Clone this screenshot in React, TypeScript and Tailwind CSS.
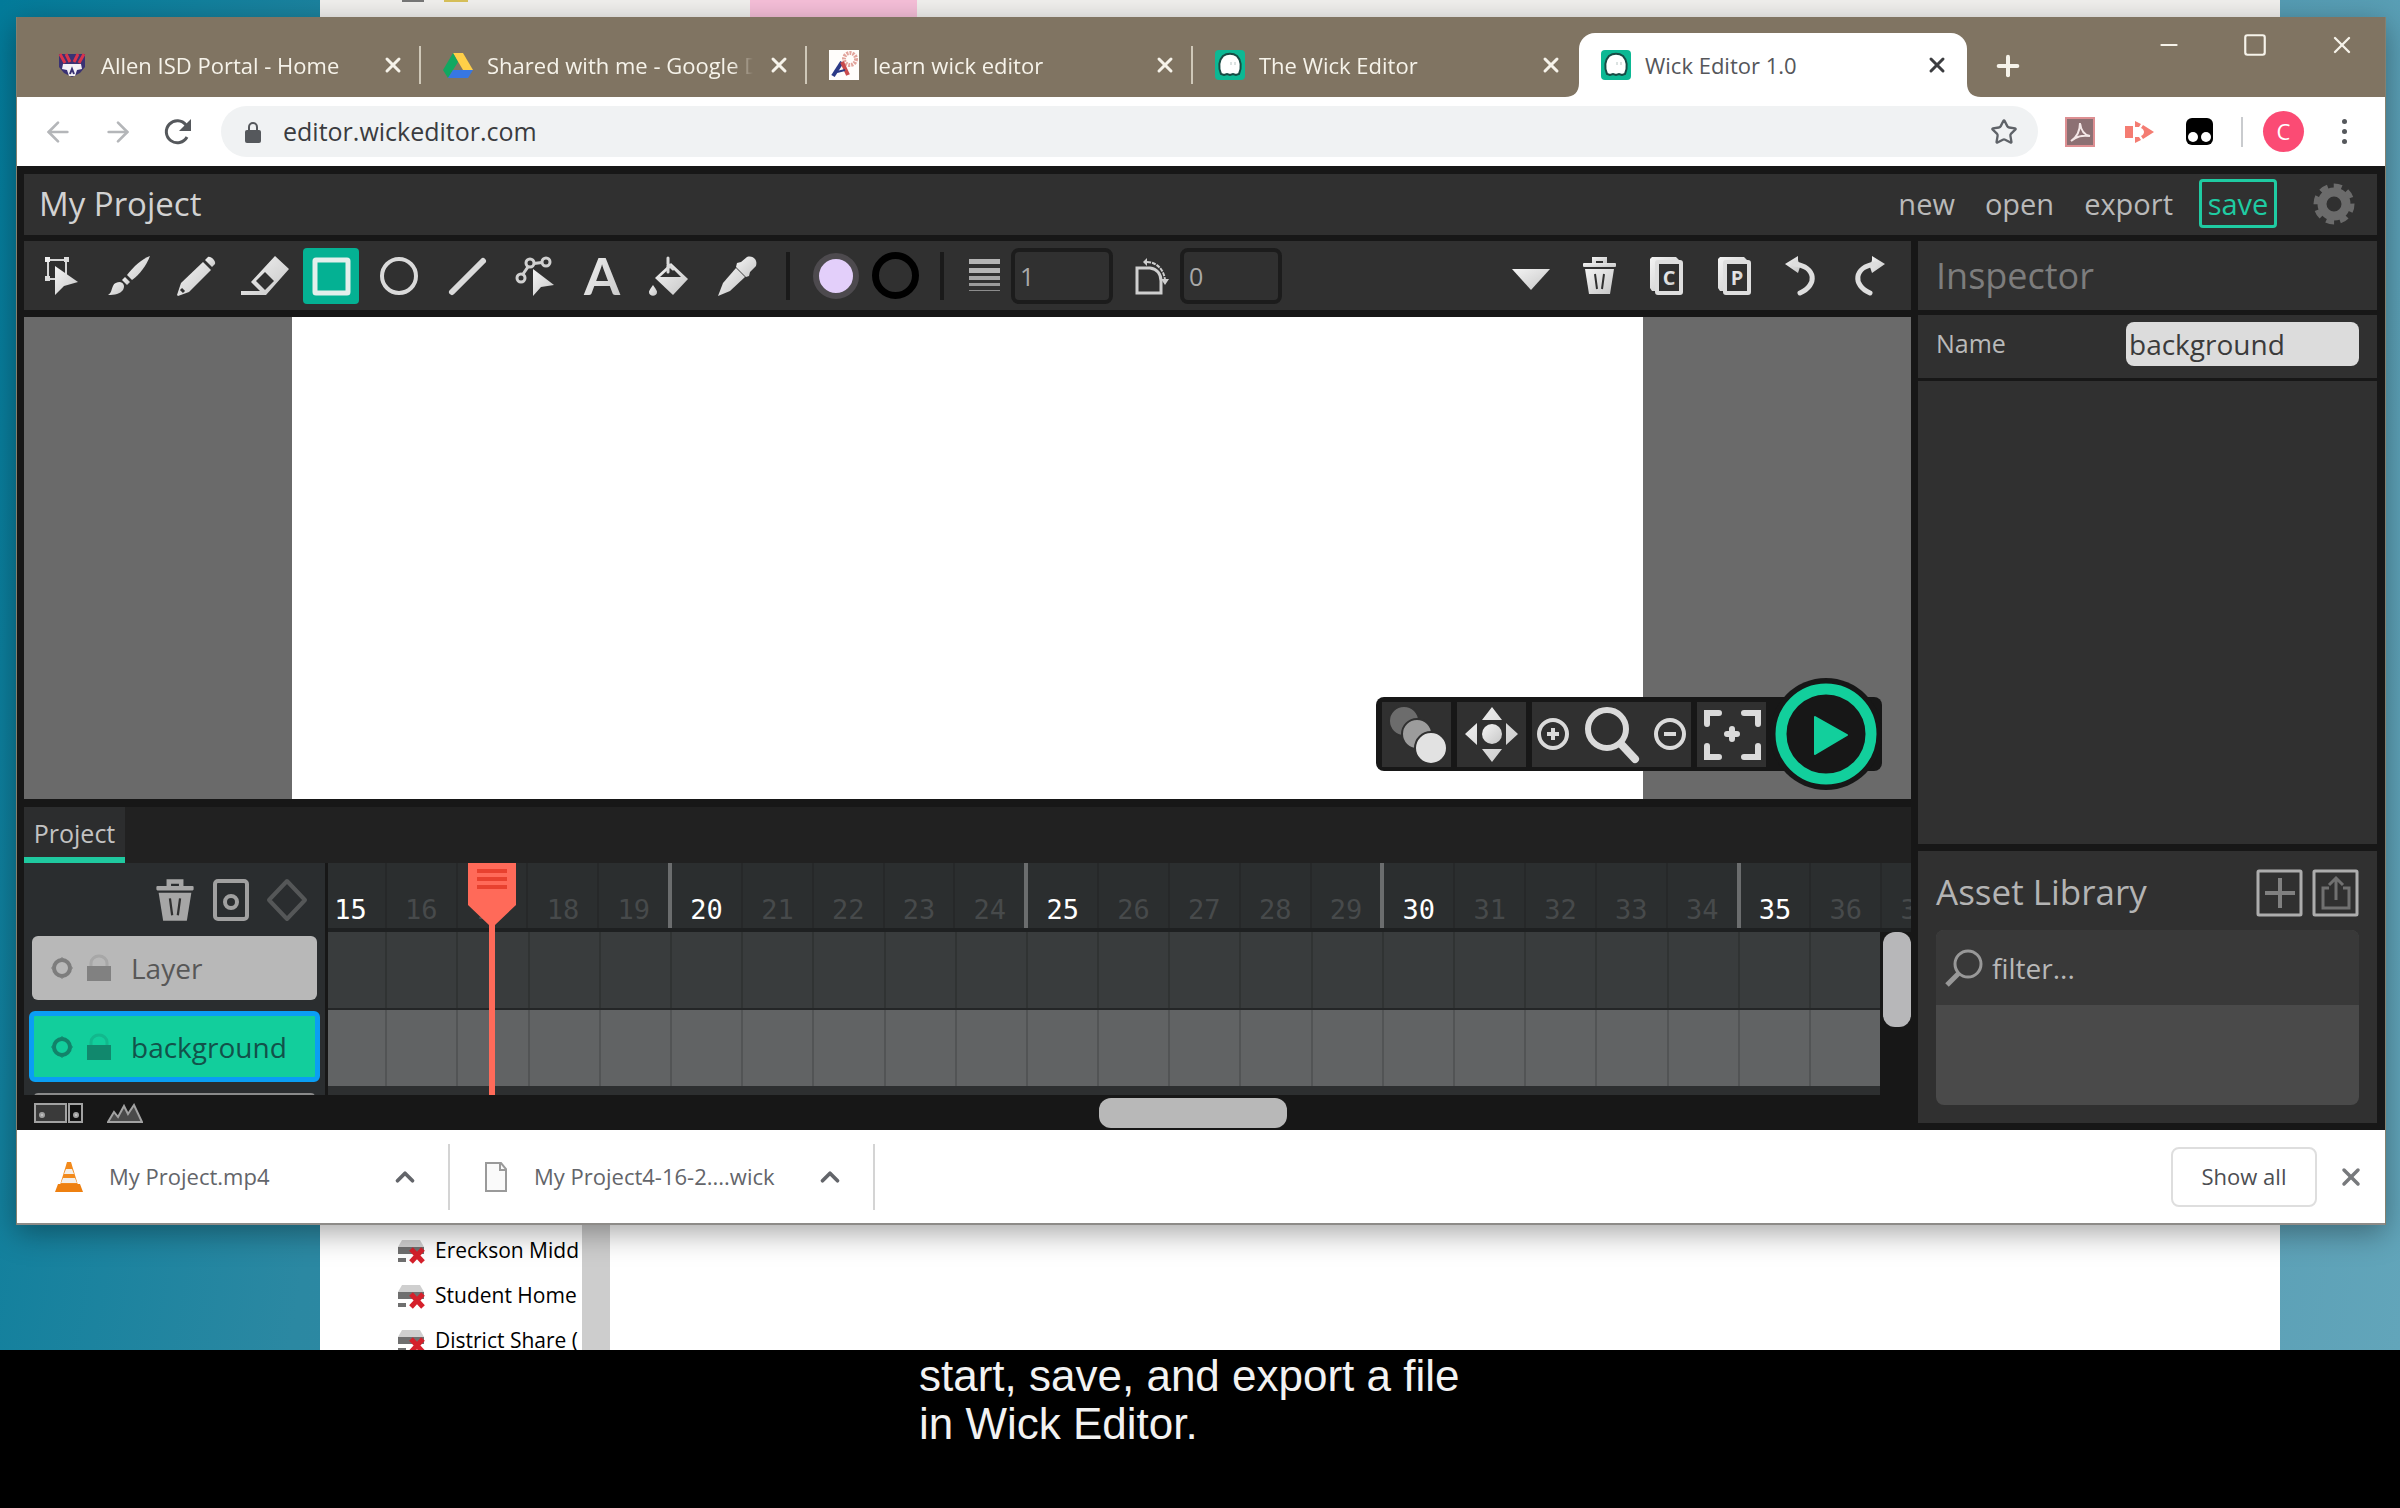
import type { ReactNode } from 'react'
import {
  ArrowLeft,
  ArrowRight,
  ChevronUp,
  Minus,
  Plus,
  Square,
  Star,
  X,
} from 'lucide-react'

const uiFont = "font-['Open_Sans','Noto_Sans',sans-serif]"

const frames = Array.from({ length: 23 }, (_, i) => i + 15)

const sharedFiles = ['Ereckson Midd', 'Student Home', 'District Share (']

/* ---------- favicons ---------- */

function SchoolIcon() {
  return (
    <svg viewBox="0 0 30 30" className="size-[30px] shrink-0">
      <path d="M2 4h26v13l-5 6-8 4-8-4-5-6z" fill="#3a3274" />
      <path d="M3 4l5 9M9 4l4 8M21 4l-4 8M27 4l-5 9" stroke="#d8344c" strokeWidth="3" />
      <path d="M6 14h18l1 5-5 1-2 6h-6l-2-6-5-1z" fill="#f3f1f6" />
      <path d="M13 24l2-5 2 5" stroke="#3a3274" strokeWidth="2" fill="none" />
    </svg>
  )
}

function DriveIcon() {
  return (
    <svg viewBox="0 0 30 30" className="size-[30px] shrink-0">
      <path d="M10 3h10l10 17H20z" fill="#ffcf48" />
      <path d="M10 3l5 9L5 28 0 20z" fill="#11a861" />
      <path d="M10 20h20l-5 8H5z" fill="#3777e3" />
    </svg>
  )
}

function LearnIcon() {
  return (
    <svg viewBox="0 0 30 30" className="size-[30px] shrink-0">
      <rect width="30" height="30" fill="#fffdfb" />
      <circle cx="21" cy="9" r="6" fill="none" stroke="#e2a49c" strokeWidth="4" strokeDasharray="2 1" />
      <path d="M4 26l9-14" stroke="#2c3a86" strokeWidth="4" />
      <path d="M13 12l6 13" stroke="#c94a4c" strokeWidth="4" />
      <path d="M8 22l8-2" stroke="#2c3a86" strokeWidth="2" />
    </svg>
  )
}

function WickIcon() {
  return (
    <svg viewBox="0 0 30 30" className="size-[30px] shrink-0">
      <rect width="30" height="30" rx="4" fill="#0cb894" />
      <path
        d="M6 24c-3-7-2-14 2-18 4-3 10-3 14 0 4 4 5 11 2 18l-3 1-3-1-3 1-3-1-3 1z"
        fill="#fff"
        stroke="#174b44"
        strokeWidth="2"
      />
      <path d="M16 12v3M20 12v3" stroke="#b9c6c4" strokeWidth="1" />
    </svg>
  )
}

const tabs = [
  { title: 'Allen ISD Portal - Home', icon: <SchoolIcon />, divider: true },
  { title: 'Shared with me - Google D', icon: <DriveIcon />, divider: true },
  { title: 'learn wick editor', icon: <LearnIcon />, divider: true },
  { title: 'The Wick Editor', icon: <WickIcon />, divider: false },
]

/* ---------- editor icons, all on a 56px board ---------- */

function Icon({ children }: { children: ReactNode }) {
  return (
    <svg viewBox="0 0 56 56" className="size-14" fill="url(#metal)" stroke="none">
      {children}
    </svg>
  )
}

function TrashShape() {
  return (
    <>
      <path d="M21 15v-6h15v6h-4v-2h-7v2z" />
      <rect x="12" y="15" width="33" height="4" rx="1" />
      <path d="M14 21h29l-4 25H18z" />
      <path d="M24 26l2 15M33 26l-2 15" stroke="#303030" strokeWidth="2" fill="none" />
    </>
  )
}

function PageShape({ letter }: { letter: string }) {
  return (
    <>
      <path d="M14 9h24l4 4H19v30h-5l-2-3V11z" />
      <rect x="19" y="14" width="24" height="31" rx="1" fill="#303030" stroke="#dedede" strokeWidth="4" />
      <text x="31" y="37" textAnchor="middle" className="font-['Open_Sans',sans-serif] text-[20px] font-bold">
        {letter}
      </text>
    </>
  )
}

const tools = [
  {
    name: 'Cursor',
    icon: (
      <>
        <rect x="15" y="12" width="18" height="19" fill="none" stroke="#d6d6d6" strokeWidth="2" />
        <path d="M12 9h5v5h-5zM31 9h5v5h-5zM12 28h5v5h-5z" />
        <path d="M22 18l23 16-14 4-9 9z" />
      </>
    ),
  },
  {
    name: 'Brush',
    icon: (
      <>
        <path d="M49 8C41 11 33 18 26 27l5 5C39 26 45 18 49 8z" />
        <path d="M24 29l5 5-3 3-5-5z" />
        <path d="M19 34c4 1 5 4 3 8-3 4-8 5-15 5 4-3 3-5 5-9 1-3 4-4 7-4z" />
      </>
    ),
  },
  {
    name: 'Pencil',
    icon: (
      <>
        <path d="M35 14l8 8-22 22-11 4-1-1 4-12z" />
        <path d="M37 12l3-3c3-1 8 4 7 7l-3 3z" />
        <path d="M13 41l3 3" stroke="#303030" strokeWidth="3" />
      </>
    ),
  },
  {
    name: 'Eraser',
    icon: (
      <>
        <path d="M39 8l14 13-23 26H5v-4h19l-9-9z" />
        <path d="M29 24l9 9-9 9-9-9z" fill="#303030" />
      </>
    ),
  },
  {
    name: 'Rectangle',
    icon: <rect x="12" y="12" width="33" height="33" rx="1" fill="none" stroke="#e4efec" strokeWidth="5" />,
  },
  {
    name: 'Ellipse',
    icon: <circle cx="28" cy="28" r="17" fill="none" stroke="#dadada" strokeWidth="4" />,
  },
  {
    name: 'Line',
    icon: <path d="M13 44L44 13" stroke="#dadada" strokeWidth="6" strokeLinecap="round" />,
  },
  {
    name: 'Path cursor',
    icon: (
      <>
        <path d="M15 29l9-13 16-2" fill="none" stroke="#d0d0d0" strokeWidth="3" />
        <g fill="#303030" stroke="#d0d0d0" strokeWidth="3">
          <circle cx="15" cy="30" r="4" />
          <circle cx="24" cy="15" r="4" />
          <circle cx="40" cy="14" r="4" />
        </g>
        <path d="M27 21l21 16-13 2-8 9z" />
      </>
    ),
  },
  {
    name: 'Text',
    icon: (
      <text x="28" y="47" textAnchor="middle" className="font-['Lato',sans-serif] text-[52px] font-bold">
        A
      </text>
    ),
  },
  {
    name: 'Fill bucket',
    icon: (
      <>
        <path d="M30 15l17 16-15 16-18-17z" />
        <path d="M30 19l10 10H19z" fill="#303030" />
        <path d="M27 10v14M27 16l5 5" stroke="#dadada" strokeWidth="3" fill="none" strokeLinecap="round" />
        <path d="M12 37c3 4 4 6 4 7 0 5-8 5-8 0 0-1 1-3 4-7z" />
      </>
    ),
  },
  {
    name: 'Eyedropper',
    icon: (
      <>
        <path d="M27 20l9 9-15 14-12 5 5-13z" />
        <path d="M28 15l4-1 6-5c6-2 11 3 9 9l-6 6-1 4-3 1-10-10z" />
      </>
    ),
  },
]

const actions = [
  { name: 'More', icon: <path d="M9 21h38L28 42z" /> },
  { name: 'Delete', icon: <TrashShape /> },
  { name: 'Copy', icon: <PageShape letter="C" /> },
  { name: 'Paste', icon: <PageShape letter="P" /> },
  {
    name: 'Undo',
    icon: (
      <>
        <path d="M12 16l13-8v4l2 7-2 6z" />
        <path d="M22 16c21 3 23 21 5 29" fill="none" stroke="#dedede" strokeWidth="5" strokeLinecap="round" />
      </>
    ),
  },
  {
    name: 'Redo',
    icon: (
      <>
        <path d="M44 16L31 8v4l-2 7 2 6z" />
        <path d="M34 16c-21 3-23 21-5 29" fill="none" stroke="#dedede" strokeWidth="5" strokeLinecap="round" />
      </>
    ),
  },
]

/* ---------- browser chrome ---------- */

function TabStrip() {
  return (
    <div className="flex h-20 shrink-0 items-end bg-[#807462] pl-[18px] text-[22px] text-[#f6f3ea]">
      {tabs.map((tab) => (
        <div key={tab.title} className="flex h-16 w-[386px] items-center pl-[22px]">
          {tab.icon}
          <span className="ml-[14px] w-[266px] overflow-hidden whitespace-nowrap [mask-image:linear-gradient(to_right,black_92%,transparent_100%)]">
            {tab.title}
          </span>
          <button aria-label={`Close ${tab.title}`} className="ml-[14px]">
            <X className="size-6" strokeWidth={3} />
          </button>
          {tab.divider && <span className="ml-auto h-[38px] w-[2px] bg-[#cfc8b8]" />}
        </div>
      ))}
      <div className="relative flex h-16 w-[388px] items-center rounded-t-2xl bg-white pl-[22px] text-[#55565a]">
        <svg viewBox="0 0 14 14" className="absolute -left-[14px] bottom-0 size-[14px]">
          <path d="M14 0v14H0C9 14 14 9 14 0z" fill="#fff" />
        </svg>
        <svg viewBox="0 0 14 14" className="absolute -right-[14px] bottom-0 size-[14px]">
          <path d="M0 0v14h14C5 14 0 9 0 0z" fill="#fff" />
        </svg>
        <WickIcon />
        <span className="ml-[14px] w-[266px]">Wick Editor 1.0</span>
        <button aria-label="Close Wick Editor 1.0" className="ml-[14px] text-[#3c3d40]">
          <X className="size-6" strokeWidth={3} />
        </button>
      </div>
      <button aria-label="New tab" className="mb-[15px] ml-[25px]">
        <Plus className="size-8" strokeWidth={3} />
      </button>
      <div className="mb-[38px] ml-auto flex items-center gap-[60px] pr-[29px]">
        <button aria-label="Minimize">
          <Minus className="size-[26px]" strokeWidth={2} />
        </button>
        <button aria-label="Maximize">
          <Square className="size-[26px]" strokeWidth={2} strokeLinejoin="miter" />
        </button>
        <button aria-label="Close window">
          <X className="size-[28px]" strokeWidth={2} />
        </button>
      </div>
    </div>
  )
}

function AddressRow() {
  return (
    <div className="flex h-[69px] shrink-0 items-center bg-white pr-[34px] pl-[25px] text-[#5f6368]">
      <button aria-label="Back" className="text-[#b4b6b9]">
        <ArrowLeft className="size-8" />
      </button>
      <button aria-label="Forward" className="ml-7 text-[#b4b6b9]">
        <ArrowRight className="size-8" />
      </button>
      <button aria-label="Reload" className="ml-[29px]">
        <svg viewBox="0 0 30 30" className="size-[30px]">
          <path d="M24 20a11 11 0 1 1-1-12" fill="none" stroke="#55585c" strokeWidth="3" />
          <path d="M28 2v12H16z" fill="#55585c" />
        </svg>
      </button>
      <div className="ml-7 flex h-[51px] flex-1 items-center rounded-full bg-[#f0f2f3] pr-5 pl-[24px]">
        <svg viewBox="0 0 16 22" className="h-[22px] w-4">
          <rect y="9" width="16" height="13" rx="2" fill="#55585c" />
          <path d="M4 10V6a4 4 0 0 1 8 0v4" fill="none" stroke="#55585c" strokeWidth="2" />
        </svg>
        <input
          aria-label="Address"
          defaultValue="editor.wickeditor.com"
          className="ml-[22px] flex-1 bg-transparent text-[25px] text-[#3a3c40] outline-none"
        />
        <button aria-label="Bookmark">
          <Star className="size-7" strokeWidth={2} />
        </button>
      </div>
      <button aria-label="PDF extension" className="ml-[27px]">
        <svg viewBox="0 0 30 30" className="size-[30px]">
          <rect x="1" y="1" width="28" height="28" fill="#8c7073" stroke="#dd8f92" strokeWidth="2" />
          <path d="M6 24c6-4 9-10 9-18 1 8 4 12 10 13-8-1-13 0-19 5z" fill="none" stroke="#f3e6e6" strokeWidth="2" />
        </svg>
      </button>
      <button aria-label="Video extension" className="ml-[30px]">
        <svg viewBox="0 0 30 24" className="h-6 w-[30px]" fill="#f47c72">
          <path d="M0 6h8v12H0z" />
          <path d="M10 1l6 3-2 3h-4zM18 5l11 7-11 7-2-3c4-2 4-6 0-8zM10 17h4l2 3-6 3z" />
        </svg>
      </button>
      <button aria-label="Script extension" className="ml-[31px]">
        <svg viewBox="0 0 27 27" className="size-[27px]">
          <rect width="27" height="27" rx="6" fill="#000" />
          <circle cx="7" cy="19" r="5" fill="#fff" />
          <circle cx="20" cy="19" r="5" fill="#fff" />
        </svg>
      </button>
      <span className="ml-7 h-[30px] w-[2px] bg-[#c9cbce]" />
      <button aria-label="Profile" className="ml-5 flex size-[41px] items-center justify-center rounded-full bg-[#fb4b74] text-[22px] text-white">
        C
      </button>
      <button aria-label="Menu" className="ml-[34px] grid gap-[5px] px-1">
        <span className="size-[5px] rounded-full bg-[#55585c]" />
        <span className="size-[5px] rounded-full bg-[#55585c]" />
        <span className="size-[5px] rounded-full bg-[#55585c]" />
      </button>
    </div>
  )
}

function DownloadsBar() {
  return (
    <div className="flex h-[95px] shrink-0 items-center border-b-2 border-[#8d8b88] bg-white pr-5 pl-[38px] text-[22px] text-[#63656a]">
      <svg viewBox="0 0 28 32" className="h-8 w-7">
        <path d="M12 1h4l7 23H5z" fill="#f28a1c" />
        <path d="M11 8h6l2 5H9zM8 17h12l2 5H6z" fill="#f3efe9" />
        <path d="M3 23h22l3 8H0z" fill="#ee8010" />
      </svg>
      <span className="ml-[26px] w-[281px]">My Project.mp4</span>
      <button aria-label="Options for My Project.mp4">
        <ChevronUp className="size-[30px]" strokeWidth={3} />
      </button>
      <span className="ml-[28px] h-[66px] w-[2px] bg-[#d4d4d4]" />
      <svg viewBox="0 0 24 32" className="ml-[34px] h-8 w-6">
        <path d="M2 2h15l5 6v22H2z" fill="#fafafa" stroke="#9a9a9a" strokeWidth="2" />
        <path d="M16 2v7h6" fill="none" stroke="#9a9a9a" strokeWidth="2" />
      </svg>
      <span className="ml-[26px] w-[281px]">My Project4-16-2....wick</span>
      <button aria-label="Options for My Project4-16-2....wick">
        <ChevronUp className="size-[30px]" strokeWidth={3} />
      </button>
      <span className="ml-[28px] h-[66px] w-[2px] bg-[#d4d4d4]" />
      <button className="ml-auto h-[60px] w-[146px] rounded-lg border-2 border-[#dedede] text-[#4c4e52]">
        Show all
      </button>
      <button aria-label="Close downloads" className="ml-[20px] text-[#77797c]">
        <X className="size-7" strokeWidth={3} />
      </button>
    </div>
  )
}

/* ---------- editor ---------- */

function MenuBar() {
  return (
    <header className="flex h-[61px] shrink-0 items-center bg-[#303030] pr-[22px] pb-[2px] pl-[15px] text-[29px] text-[#b9b9b9]">
      <h1 className="text-[33px] text-[#d2d2d2]">My Project</h1>
      <nav className="ml-auto flex items-center">
        <button>new</button>
        <button className="ml-[30px]">open</button>
        <button className="ml-[30px]">export</button>
        <button className="ml-[26px] flex h-[49px] w-[78px] items-center justify-center rounded-sm border-3 border-[#1fcba2] text-[#1fcba2]">
          save
        </button>
        <button aria-label="Settings" className="ml-9">
          <svg viewBox="0 0 42 42" className="size-[42px]">
            <circle cx="21" cy="21" r="12" fill="none" stroke="#6b6b6b" strokeWidth="9" />
            <circle cx="21" cy="21" r="18" fill="none" stroke="#6b6b6b" strokeWidth="5" strokeDasharray="8 6" />
          </svg>
        </button>
      </nav>
    </header>
  )
}

function Toolbar() {
  return (
    <div className="flex h-[69px] shrink-0 items-center bg-[#303030] pr-[14px] pl-[9px] text-[25px] text-[#a9a9a9]">
      <div className="flex w-[732px] justify-between">
        {tools.map((tool) => (
          <button
            key={tool.name}
            aria-label={tool.name}
            className={`rounded-sm ${tool.name === 'Rectangle' ? 'bg-[#04b193]' : ''}`}
          >
            <Icon>{tool.icon}</Icon>
          </button>
        ))}
      </div>
      <span className="ml-[21px] h-12 w-1 bg-[#1a1a1a]" />
      <button aria-label="Fill color" className="ml-[23px] size-[46px] rounded-full border-6 border-[#4d4a4e] bg-[#e3cffa]" />
      <button aria-label="Stroke color" className="ml-[13px] size-[47px] rounded-full border-7 border-black" />
      <span className="ml-[21px] h-12 w-1 bg-[#1a1a1a]" />
      <label htmlFor="stroke-width" aria-label="Stroke width" className="ml-[25px]">
        <svg viewBox="0 0 31 34" className="h-[34px] w-[31px]" fill="#b4b4b4">
          <rect width="31" height="5" />
          <rect y="9" width="31" height="5" />
          <rect y="17" width="31" height="4" opacity=".9" />
          <rect y="24" width="31" height="3" opacity=".8" />
          <rect y="31" width="31" height="1" opacity=".7" />
        </svg>
      </label>
      <input id="stroke-width" defaultValue="1" className="ml-[11px] h-14 w-[102px] rounded-lg border-4 border-[#1c1c1c] px-[5px] outline-none" />
      <label htmlFor="corner-radius" aria-label="Corner radius" className="ml-[22px]">
        <svg viewBox="0 0 34 38" className="h-[38px] w-[34px]" fill="none" stroke="#cfcfcf" strokeWidth="3">
          <path d="M2 11h13c7 1 11 6 11 13v12H2z" />
          <path d="M12 5c10 0 17 8 18 18" strokeDasharray="4 1" strokeWidth="2" />
          <path d="M12 1v8l-4-4zM26 22h8l-4 6z" fill="#cfcfcf" stroke="none" />
        </svg>
      </label>
      <input id="corner-radius" defaultValue="0" className="ml-[11px] h-14 w-[102px] rounded-lg border-4 border-[#1c1c1c] px-[5px] outline-none" />
      <div className="ml-auto flex w-[394px] justify-between">
        {actions.map((action) => (
          <button key={action.name} aria-label={action.name}>
            <Icon>{action.icon}</Icon>
          </button>
        ))}
      </div>
    </div>
  )
}

function CanvasControls() {
  return (
    <div className="absolute right-[29px] bottom-[28px] flex h-[74px] items-center gap-[6px] rounded-lg bg-[#171717] pr-[116px] pl-[6px]">
      <button aria-label="Onion skinning" className="bg-[#303030]">
        <svg viewBox="0 0 69 65" className="h-[65px] w-[69px]" stroke="#303030" strokeWidth="2">
          <circle cx="22" cy="19" r="15" fill="#6c6c6c" />
          <circle cx="35" cy="32" r="15" fill="#9c9c9c" />
          <circle cx="49" cy="46" r="16" fill="#e2e2e2" />
        </svg>
      </button>
      <button aria-label="Pan" className="bg-[#303030]">
        <svg viewBox="0 0 69 65" className="h-[65px] w-[69px]" fill="url(#metal)">
          <circle cx="35" cy="32" r="10" />
          <path d="M35 5l10 13H25zM35 60l10-13H25zM8 32l12-11v22zM61 32L49 21v22z" />
        </svg>
      </button>
      <div className="flex h-[65px] w-[159px] items-center justify-between bg-[#303030] px-[5px]">
        <button aria-label="Zoom in">
          <svg viewBox="0 0 32 32" className="size-8" fill="none" stroke="#dadada" strokeWidth="4">
            <circle cx="16" cy="16" r="14" />
            <path d="M16 10v12M10 16h12" />
          </svg>
        </button>
        <button aria-label="Reset zoom">
          <svg viewBox="0 0 56 60" className="h-[60px] w-14" fill="none" stroke="#dadada" strokeWidth="6">
            <circle cx="23" cy="25" r="19" />
            <path d="M37 40l14 15" strokeWidth="8" strokeLinecap="round" />
          </svg>
        </button>
        <button aria-label="Zoom out">
          <svg viewBox="0 0 32 32" className="size-8" fill="none" stroke="#dadada" strokeWidth="4">
            <circle cx="16" cy="16" r="14" />
            <path d="M10 16h12" />
          </svg>
        </button>
      </div>
      <button aria-label="Fit to screen" className="bg-[#303030]">
        <svg viewBox="0 0 69 65" className="h-[65px] w-[69px]" fill="none" stroke="#dadada" strokeWidth="6" strokeLinecap="round">
          <path d="M10 22V11h12M47 11h14v11M61 44v11H47M22 55H10V44M35 27v10M30 32h10" />
        </svg>
      </button>
      <button aria-label="Play" className="absolute right-0 -bottom-[19px]">
        <svg viewBox="0 0 112 112" className="size-28">
          <circle cx="56" cy="56" r="56" fill="#171717" />
          <circle cx="56" cy="56" r="45" fill="none" stroke="#12cf9c" strokeWidth="11" />
          <path d="M45 39l32 18-32 19z" fill="#12cf9c" stroke="#12cf9c" strokeWidth="2" strokeLinejoin="round" />
        </svg>
      </button>
    </div>
  )
}

function LayerRow({ name, active }: { name: string; active?: boolean }) {
  return (
    <div
      className={`flex shrink-0 items-center rounded-md text-[28px] ${
        active
          ? 'mx-[5px] h-[71px] border-5 border-[#0a9ef4] bg-[#12ce9c] pl-[15px] text-[#12524a]'
          : 'mx-2 h-16 bg-[#b8b8b8] pl-[17px] text-[#575757]'
      }`}
    >
      <button aria-label={`Hide ${name}`}>
        <svg viewBox="0 0 26 26" className="size-[26px]" fill="none" stroke="currentColor" opacity=".6">
          <circle cx="13" cy="13" r="8" strokeWidth="4" />
          <path d="M13 2L2 13l11 11 11-11z" strokeWidth="1" opacity=".5" />
        </svg>
      </button>
      <button aria-label={`Lock ${name}`} className="ml-[12px]">
        <svg viewBox="0 0 24 28" className="h-7 w-6" opacity=".7">
          <path d="M4 12V9a8 7 0 0 1 16 0v3" fill="none" stroke="currentColor" strokeWidth="3" opacity=".25" />
          <rect y="12" width="24" height="15" fill="currentColor" opacity=".8" />
        </svg>
      </button>
      <span className="ml-[20px]">{name}</span>
    </div>
  )
}

function FrameRow({ className }: { className: string }) {
  return (
    <div className={`flex h-[76px] shrink-0 ${className}`}>
      {frames.slice(0, 22).map((frame) => (
        <span key={frame} className="flex-1 border-l-2 border-black/15" />
      ))}
    </div>
  )
}

function Timeline() {
  return (
    <section className="mt-2 flex shrink-0 flex-col">
      <div className="flex h-14 bg-[#212121]">
        <button className="h-14 w-[101px] border-b-6 border-[#1fc9a0] bg-[#2c2d2e] pt-1 text-[25px] text-[#c2c2c2]">
          Project
        </button>
      </div>
      <div className="flex h-[232px]">
        <div className="flex w-[301px] flex-col overflow-hidden bg-[#2a2d2f]">
          <div className="flex h-[73px] shrink-0 items-center justify-end gap-4 pt-1 pr-4 pb-1">
            <button aria-label="Delete frame">
              <svg viewBox="10 8 37 39" className="size-[44px]" fill="#a6a6a6">
                <TrashShape />
              </svg>
            </button>
            <button aria-label="Add frame">
              <svg viewBox="0 0 36 42" className="h-[42px] w-9" fill="none" stroke="#a0a0a0" strokeWidth="4">
                <rect x="2" y="2" width="32" height="38" rx="3" />
                <circle cx="18" cy="23" r="6" />
              </svg>
            </button>
            <button aria-label="Add tween">
              <svg viewBox="0 0 44 44" className="size-11" fill="none" stroke="#555758" strokeWidth="4">
                <path d="M22 3l18 19-18 19L4 22z" strokeLinejoin="round" />
              </svg>
            </button>
          </div>
          <LayerRow name="Layer" />
          <div className="h-[11px] shrink-0" />
          <LayerRow name="background" active />
          <div className="mx-[10px] mt-[11px] h-2 shrink-0 rounded-t bg-[#8a8a8a]" />
        </div>
        <div className="relative flex flex-1 flex-col overflow-hidden border-l-3 border-[#171717]">
          <div className="-mr-[40px] -ml-[16px] flex h-[65px] shrink-0 bg-[#2b2e2f]">
            {frames.map((frame) => (
              <span
                key={frame}
                className={`flex flex-1 items-end justify-center font-['DejaVu_Sans_Mono',monospace] text-[27px] leading-9 ${
                  frame % 5 === 0
                    ? 'border-l-4 border-[#6b6d6e] text-white'
                    : 'border-l-2 border-[#262829] text-[#474a4b]'
                }`}
              >
                {frame}
              </span>
            ))}
          </div>
          <div className="h-1 shrink-0 bg-[#1e2021]" />
          <div className="flex h-[163px]">
            <div className="flex flex-1 flex-col overflow-hidden bg-[#2d2f30]">
              <FrameRow className="-ml-[14px] bg-[#393c3d]" />
              <div className="h-[2px] shrink-0 bg-[#242627]" />
              <FrameRow className="-ml-[14px] bg-[#616364]" />
            </div>
            <div className="w-[31px] bg-[#171717] pl-[3px]">
              <div className="h-[95px] rounded-xl bg-[#b7b7b9]" />
            </div>
          </div>
          <svg viewBox="0 0 48 232" className="absolute top-0 left-[140px] h-[232px] w-12">
            <path d="M0 0h48v42L27 62v170h-6V62L0 42z" fill="#ff6a59" />
            <path d="M9 8h30M9 16h30M9 24h30" stroke="#e8412f" strokeWidth="4" />
          </svg>
        </div>
      </div>
      <div className="flex h-[35px] items-center bg-[#171717]">
        <div className="flex w-[304px] items-center gap-6 pl-[10px]">
          <button aria-label="Frame size">
            <svg viewBox="0 0 49 20" className="h-5 w-[49px]" fill="#3a3a3a" stroke="#a2a2a2" strokeWidth="2">
              <rect x="1" y="1" width="31" height="18" />
              <rect x="35" y="1" width="13" height="18" fill="#111" />
              <circle cx="8" cy="12" r="2" fill="#ccc" />
              <circle cx="42" cy="12" r="2" fill="#ccc" />
            </svg>
          </button>
          <button aria-label="Frame style">
            <svg viewBox="0 0 36 20" className="h-5 w-9" fill="#4a4a4a" stroke="#a2a2a2" strokeWidth="2">
              <path d="M1 19l6-10 4 5 6-11 4 8 6-9 8 17z" />
            </svg>
          </button>
        </div>
        <div className="ml-[771px] h-[30px] w-[188px] rounded-xl bg-[#b8b8b8]" />
      </div>
    </section>
  )
}

function Sidebar() {
  return (
    <aside className="flex w-[459px] shrink-0 flex-col pb-[7px]">
      <h2 className="flex h-[69px] shrink-0 items-center bg-[#303030] pl-[18px] text-[36px] text-[#7d7d7d]">Inspector</h2>
      <div className="mt-[5px] flex h-[63px] shrink-0 items-center justify-between bg-[#303030] pr-[18px] pb-[6px] pl-[18px] text-[25px]">
        <label htmlFor="layer-name" className="font-medium text-[#b9b9b9]">
          Name
        </label>
        <input
          id="layer-name"
          defaultValue="background"
          className="h-11 w-[233px] rounded-lg bg-[#dcdcdc] px-[3px] text-[28px] text-[#3b3b3b] outline-none"
        />
      </div>
      <div className="mt-[3px] flex-1 bg-[#303030]" />
      <section className="mt-[7px] h-[272px] shrink-0 bg-[#303030] px-[18px]">
        <div className="flex h-[79px] items-center gap-[9px] pt-1">
          <h2 className="mr-auto text-[35px] text-[#b4b4b4]">Asset Library</h2>
          <button aria-label="Add asset">
            <svg viewBox="0 0 47 48" className="h-12 w-[47px]" fill="none" stroke="#adadad" strokeWidth="3">
              <rect x="2" y="2" width="43" height="44" rx="1" />
              <path d="M24 9v30M9 24h30" stroke="#808080" strokeWidth="4" />
            </svg>
          </button>
          <button aria-label="Upload asset">
            <svg viewBox="0 0 47 48" className="h-12 w-[47px]" fill="none" stroke="#adadad" strokeWidth="3">
              <rect x="2" y="2" width="43" height="44" rx="1" />
              <path d="M17 19h-6v20h26V19h-6M24 31V9M17 16l7-7 7 7" stroke="#707070" strokeWidth="3" />
            </svg>
          </button>
        </div>
        <div className="h-[175px] overflow-hidden rounded-lg bg-[#4a4a4a]">
          <label className="flex h-[75px] items-center bg-[#393939] pl-2">
            <svg viewBox="0 0 40 40" className="size-10" fill="none" stroke="#989898" strokeWidth="3">
              <circle cx="24" cy="16" r="13" />
              <path d="M15 25L3 37" strokeWidth="5" />
            </svg>
            <input
              aria-label="Filter assets"
              placeholder="filter..."
              className="ml-2 flex-1 text-[28px] outline-none placeholder:text-[#b8b8b8]"
            />
          </label>
        </div>
      </section>
    </aside>
  )
}

function WickEditor() {
  return (
    <main className="flex flex-1 flex-col gap-[6px] bg-[#171717] pt-2 pr-2 pl-[7px]">
      <MenuBar />
      <div className="flex flex-1 gap-[7px]">
        <div className="flex min-w-0 flex-1 flex-col">
          <Toolbar />
          <div className="relative mt-[7px] flex min-h-[200px] flex-1 bg-[#6a6a6a] px-[268px]">
            <div className="flex-1 bg-white" />
            <CanvasControls />
          </div>
          <Timeline />
        </div>
        <Sidebar />
      </div>
    </main>
  )
}

function ExplorerWindow() {
  return (
    <div className="absolute inset-y-0 right-[120px] left-[320px] flex flex-col justify-between overflow-hidden bg-white">
      <div className="flex h-[17px] bg-[#f1f0ee]">
        <span className="ml-[82px] h-[2px] w-[22px] bg-[#777]" />
        <span className="ml-5 h-[2px] w-6 bg-[#d9c25a]" />
        <span className="ml-[282px] h-[17px] w-[167px] bg-[#f6bfd9]" />
      </div>
      <div className="flex h-[127px] text-[21px] text-black">
        <ul className="w-[262px] overflow-hidden pt-[5px] pl-[78px]">
          {sharedFiles.map((name) => (
            <li key={name} className="flex h-[45px] items-center gap-[9px] whitespace-nowrap">
              <svg viewBox="0 0 28 26" className="h-[26px] w-7 shrink-0">
                <path d="M4 2h18l4 7H0z" fill="#cfcfcf" />
                <path d="M0 9h26v7H0zM0 20h8v4H0z" fill="#6f6f6f" />
                <path d="M13 11l12 13M25 11L13 24" stroke="#d5202b" strokeWidth="5" />
              </svg>
              {name}
            </li>
          ))}
        </ul>
        <div className="w-7 bg-[#cdcdcd]" />
      </div>
    </div>
  )
}

export default function App() {
  return (
    <div className={`flex min-h-screen flex-col bg-black ${uiFont}`}>
      <svg className="absolute size-0">
        <defs>
          <linearGradient id="metal" x1="0" y1="0" x2="1" y2="1">
            <stop offset="0" stopColor="#f4f4f4" />
            <stop offset="1" stopColor="#c6c6c6" />
          </linearGradient>
        </defs>
      </svg>
      <div className="relative flex flex-1 flex-col overflow-hidden bg-[linear-gradient(100deg,#037b9a,#2b88a2_20%,#3c8aa5_60%,#62a5ba)] pt-[17px] pr-[14px] pb-[125px] pl-4">
        <ExplorerWindow />
        <div className="relative flex flex-1 flex-col border-x border-[#85806f] shadow-[0_8px_28px_rgba(0,0,0,0.35)]">
          <TabStrip />
          <AddressRow />
          <WickEditor />
          <DownloadsBar />
        </div>
      </div>
      <footer className="h-[158px] shrink-0 pt-[2px]">
        <p className="mx-auto w-[562px] font-['Liberation_Sans',Arial,sans-serif] text-[44px] leading-[48px] text-[#f2f2f2]">
          start, save, and export a file
          <br />
          in Wick Editor.
        </p>
      </footer>
    </div>
  )
}
